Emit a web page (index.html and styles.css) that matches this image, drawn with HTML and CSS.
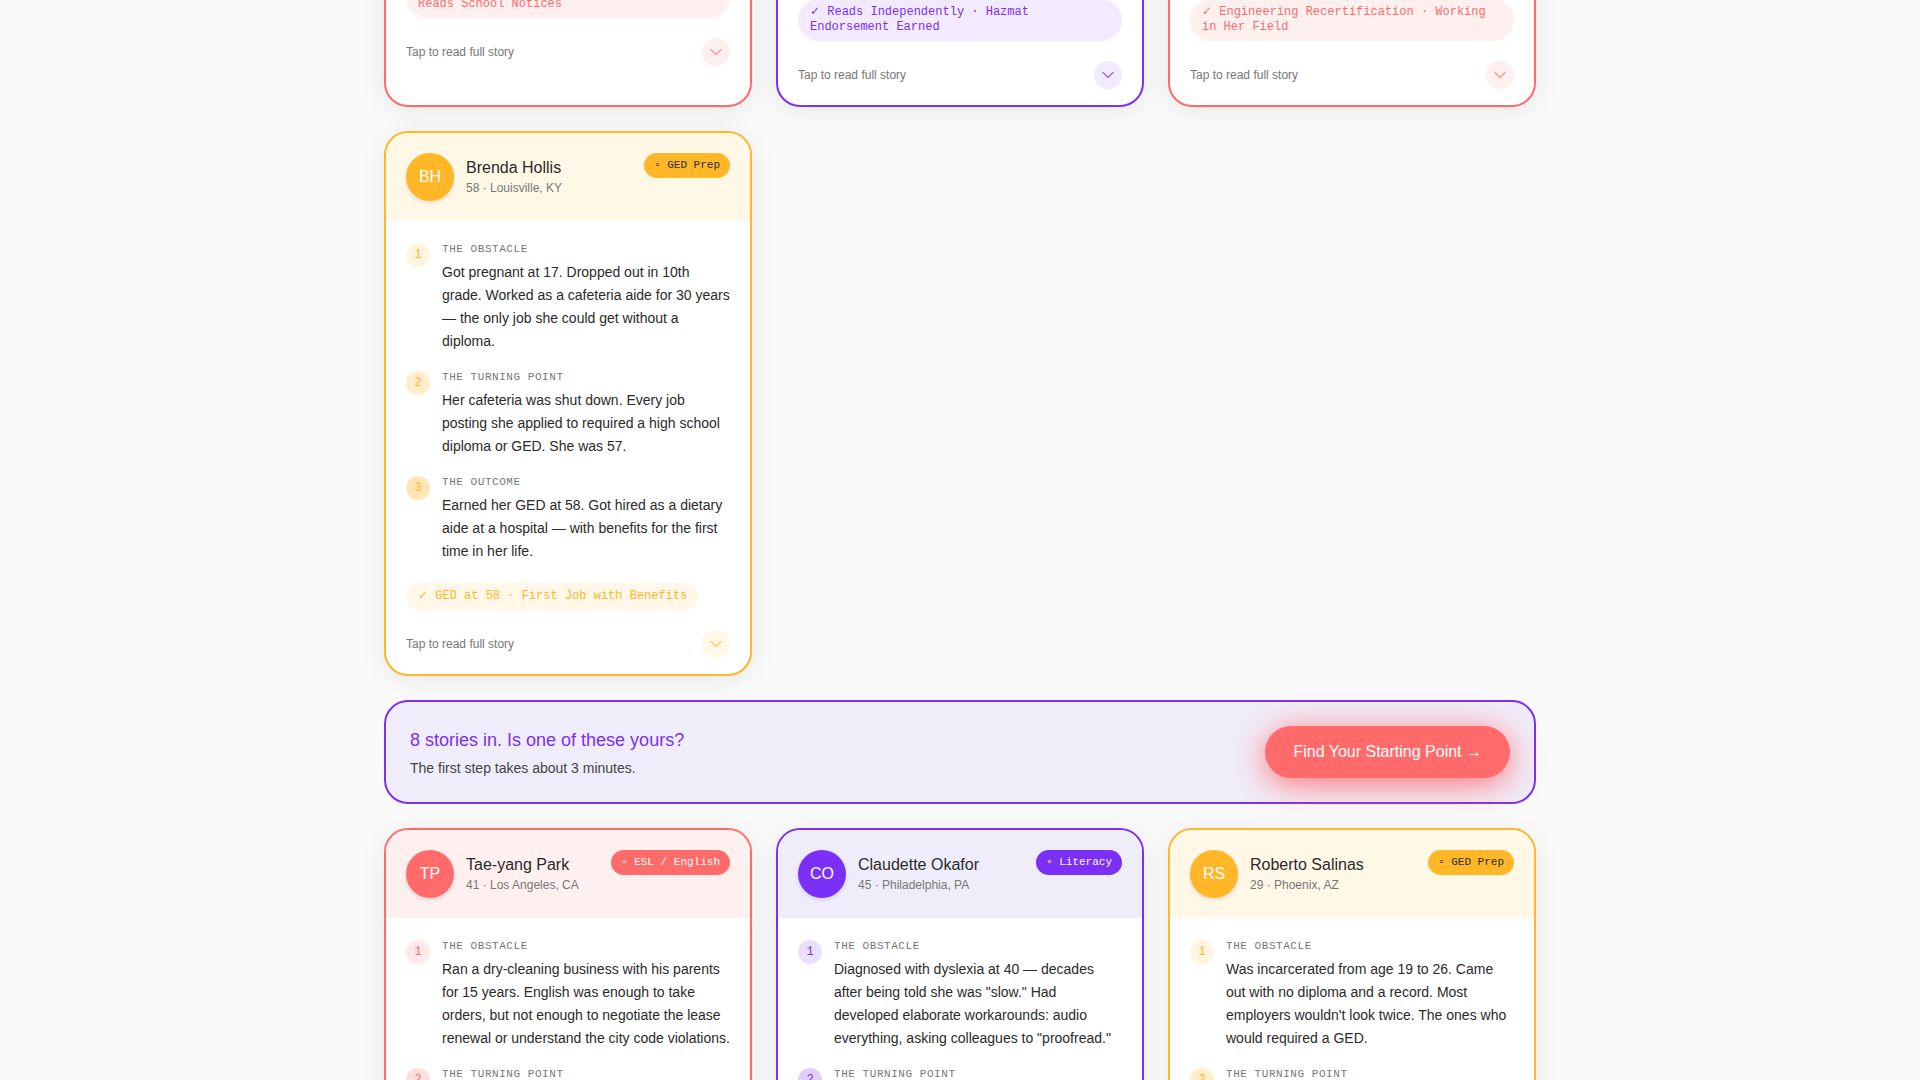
FILE: index.html
```html
<!DOCTYPE html>
<html lang="en">
<head>
<meta charset="utf-8">
<meta name="viewport" content="width=device-width, initial-scale=1">
<title>Success Stories</title>
<link rel="stylesheet" href="styles.css">
</head>
<body>
<svg class="sprite" aria-hidden="true">
  <symbol id="chevron" viewBox="0 0 24 24"><path d="M6 9l6 6 6-6" fill="none" stroke="currentColor" stroke-width="1.5" stroke-linecap="round" stroke-linejoin="round"/></symbol>
</svg>
<div class="viewport">
<main class="stories">

  <article class="card coral">
    <div class="card-body tail">
      <p class="result">✓<br>Reads School Notices</p>
      <div class="card-foot"><span>Tap to read full story</span><button class="toggle" type="button" aria-label="Expand story"><svg><use href="#chevron"/></svg></button></div>
    </div>
  </article>

  <article class="card purple">
    <div class="card-body tail tail-long">
      <p class="result">✓ Reads Independently · Hazmat Endorsement Earned</p>
      <div class="card-foot"><span>Tap to read full story</span><button class="toggle" type="button" aria-label="Expand story"><svg><use href="#chevron"/></svg></button></div>
    </div>
  </article>

  <article class="card coral">
    <div class="card-body tail tail-long">
      <p class="result">✓ Engineering Recertification · Working in Her Field</p>
      <div class="card-foot"><span>Tap to read full story</span><button class="toggle" type="button" aria-label="Expand story"><svg><use href="#chevron"/></svg></button></div>
    </div>
  </article>

  <article class="card yellow">
    <header class="card-head">
      <div class="avatar">BH</div>
      <div class="who"><h2>Brenda Hollis</h2><p>58 · Louisville, KY</p></div>
      <span class="tag">▫ GED Prep</span>
    </header>
    <div class="card-body">
      <ol class="steps">
        <li><span class="num">1</span><div><h3>The Obstacle</h3><p>Got pregnant at 17. Dropped out in 10th grade. Worked as a cafeteria aide for 30 years — the only job she could get without a diploma.</p></div></li>
        <li><span class="num">2</span><div><h3>The Turning Point</h3><p>Her cafeteria was shut down. Every job posting she applied to required a high school diploma or GED. She was 57.</p></div></li>
        <li><span class="num">3</span><div><h3>The Outcome</h3><p>Earned her GED at 58. Got hired as a dietary aide at a hospital — with benefits for the first time in her life.</p></div></li>
      </ol>
      <p class="result">✓ GED at 58 · First Job with Benefits</p>
      <div class="card-foot"><span>Tap to read full story</span><button class="toggle" type="button" aria-label="Expand story"><svg><use href="#chevron"/></svg></button></div>
    </div>
  </article>

  <section class="cta">
    <div>
      <h2>8 stories in. Is one of these yours?</h2>
      <p>The first step takes about 3 minutes.</p>
    </div>
    <button class="cta-button" type="button">Find Your Starting Point →</button>
  </section>

  <article class="card coral">
    <header class="card-head">
      <div class="avatar">TP</div>
      <div class="who"><h2>Tae-yang Park</h2><p>41 · Los Angeles, CA</p></div>
      <span class="tag">▫ ESL / English</span>
    </header>
    <div class="card-body">
      <ol class="steps">
        <li><span class="num">1</span><div><h3>The Obstacle</h3><p>Ran a dry-cleaning business with his parents for 15 years. English was enough to take orders, but not enough to negotiate the lease renewal or understand the city code violations.</p></div></li>
        <li><span class="num">2</span><div><h3>The Turning Point</h3></div></li>
      </ol>
    </div>
  </article>

  <article class="card purple">
    <header class="card-head">
      <div class="avatar">CO</div>
      <div class="who"><h2>Claudette Okafor</h2><p>45 · Philadelphia, PA</p></div>
      <span class="tag">▫ Literacy</span>
    </header>
    <div class="card-body">
      <ol class="steps">
        <li><span class="num">1</span><div><h3>The Obstacle</h3><p>Diagnosed with dyslexia at 40 — decades after being told she was "slow." Had developed elaborate workarounds: audio everything, asking colleagues to "proofread."</p></div></li>
        <li><span class="num">2</span><div><h3>The Turning Point</h3></div></li>
      </ol>
    </div>
  </article>

  <article class="card yellow">
    <header class="card-head">
      <div class="avatar">RS</div>
      <div class="who"><h2>Roberto Salinas</h2><p>29 · Phoenix, AZ</p></div>
      <span class="tag">▫ GED Prep</span>
    </header>
    <div class="card-body">
      <ol class="steps">
        <li><span class="num">1</span><div><h3>The Obstacle</h3><p>Was incarcerated from age 19 to 26. Came out with no diploma and a record. Most employers wouldn't look twice. The ones who would required a GED.</p></div></li>
        <li><span class="num">2</span><div><h3>The Turning Point</h3></div></li>
      </ol>
    </div>
  </article>

</main>
</div>
</body>
</html>
```

FILE: styles.css
```css
* { box-sizing: border-box; margin: 0; padding: 0; }

body {
  background: #fafafa;
  color: #2a2a2a;
  font-family: "Liberation Sans", Arial, sans-serif;
  font-size: 14px;
}

h2, h3 { font-weight: 400; }
button { border: 0; font: inherit; cursor: pointer; }
.sprite { display: none; }

.viewport { height: 100vh; overflow: hidden; }

.stories {
  max-width: 1200px;
  margin: -50px auto 0;
  padding: 0 24px 24px;
  display: grid;
  grid-template-columns: repeat(3, minmax(0, 1fr));
  gap: 24px;
}

/* Programme themes */
.coral {
  --accent: #ff6b6b; --tint: #fff0f0; --pill: #fff0f0; --tag-text: #fff;
  --n1: #ffe9e9; --n2: #ffdede; --n3: #ffd3d3;
}
.purple {
  --accent: #7b2ff7; --tint: #f0edfa; --pill: #f2eafe; --tag-text: #fff;
  --n1: #ebe0fe; --n2: #e0cffd; --n3: #d3bbfc;
}
.yellow {
  --accent: #ffb627; --tint: #fff8e7; --pill: #fff8e9; --tag-text: #2d2d2d;
  --n1: #fff4df; --n2: #ffedcc; --n3: #ffe6b8;
}

.card {
  background: #fff;
  border: 2px solid var(--accent);
  border-radius: 24px;
  box-shadow: 0 4px 24px rgba(0, 0, 0, 0.08);
  overflow: hidden;
}

.card-head {
  display: flex;
  align-items: flex-start;
  gap: 12px;
  padding: 20px;
  background: var(--tint);
}

.avatar {
  flex: none;
  display: grid;
  place-items: center;
  width: 48px;
  height: 48px;
  border-radius: 50%;
  background: var(--accent);
  color: #fff;
  font-size: 16px;
  box-shadow: 0 2px 4px rgba(0, 0, 0, 0.12);
}

.who { flex: 1; align-self: center; }
.who h2 { font-size: 16px; line-height: 22px; }
.who p { color: #777; font-size: 12px; line-height: 18px; }

.tag {
  padding: 6px 10px;
  border-radius: 999px;
  background: var(--accent);
  color: var(--tag-text);
  font-family: "Liberation Mono", monospace;
  font-size: 11px;
  line-height: 13px;
  white-space: nowrap;
}

.card-body { padding: 20px 20px 16px; }
.tail { padding-top: 24px; }
.tail-long { padding-top: 47px; }

.steps { display: grid; gap: 16px; margin-bottom: 20px; list-style: none; }
.steps li { display: flex; gap: 12px; }
.steps h3 {
  margin-bottom: 4px;
  color: #777;
  font-family: "Liberation Mono", monospace;
  font-size: 11px;
  line-height: 16px;
  letter-spacing: 0.05em;
  text-transform: uppercase;
}
.steps p { line-height: 23px; }

.num {
  flex: none;
  width: 24px;
  height: 24px;
  margin-top: 2px;
  border-radius: 50%;
  background: var(--n1);
  color: var(--accent);
  font-family: "Liberation Mono", monospace;
  font-size: 12px;
  line-height: 24px;
  text-align: center;
}
.steps li:nth-child(2) .num { background: var(--n2); }
.steps li:nth-child(3) .num { background: var(--n3); }

.result {
  width: fit-content;
  padding: 6px 12px;
  border-radius: 999px;
  background: var(--pill);
  color: var(--accent);
  font-family: "Liberation Mono", "DejaVu Sans", monospace;
  font-size: 12px;
  line-height: 15px;
}
.tail .result { width: auto; }

.card-foot {
  display: flex;
  align-items: center;
  justify-content: space-between;
  margin-top: 20px;
  color: #777;
  font-size: 12px;
}

.toggle {
  display: grid;
  place-items: center;
  width: 28px;
  height: 28px;
  border-radius: 50%;
  background: var(--pill);
  color: var(--accent);
}
.toggle svg { width: 20px; height: 20px; opacity: 0.7; }

.cta {
  grid-column: 1 / -1;
  display: flex;
  align-items: center;
  justify-content: space-between;
  gap: 24px;
  padding: 24px;
  border: 2px solid #7b2ff7;
  border-radius: 24px;
  background: #f0edfa;
}
.cta h2 { margin-bottom: 4px; color: #7b2ff7; font-size: 18px; line-height: 28px; }
.cta p { color: #444; line-height: 20px; }

.cta-button {
  padding: 14px 28px;
  border-radius: 999px;
  background: #ff6b6b;
  color: #fff;
  font-size: 16px;
  line-height: 24px;
  white-space: nowrap;
  box-shadow: 0 6px 32px rgba(255, 107, 107, 0.95);
}
```
